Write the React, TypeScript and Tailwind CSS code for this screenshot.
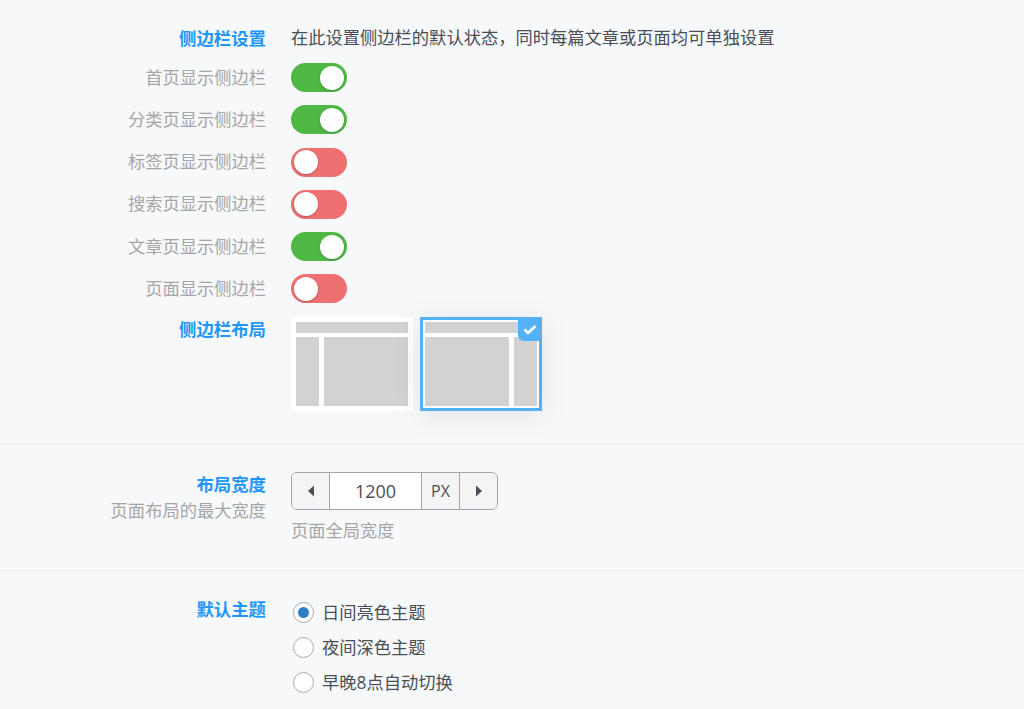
import React from 'react';

const labelFont = "font-['Open_Sans','Noto_Sans_CJK_SC',sans-serif]";

const sidebarRows = [
    { label: '首页显示侧边栏', on: true },
    { label: '分类页显示侧边栏', on: true },
    { label: '标签页显示侧边栏', on: false },
    { label: '搜索页显示侧边栏', on: false },
    { label: '文章页显示侧边栏', on: true },
    { label: '页面显示侧边栏', on: false },
];

const Toggle = ({ on }: { on: boolean }) => (
    <div
        className={`flex h-[29px] w-14 items-center rounded-full border-2 px-[1px] ${
            on ? 'justify-end border-[#4fb845] bg-[#4fb845]' : 'justify-start border-[#ee7071] bg-[#ee7071]'
        }`}
    >
        <div className="h-6 w-6 rounded-full bg-white shadow-[0_1px_2px_rgba(0,0,0,0.25)]" />
    </div>
);

const Title = ({ children }: { children: React.ReactNode }) => (
    <div className="text-right text-[17.4px] leading-6 font-bold text-[#1e96fb]">{children}</div>
);

const LayoutPick = ({ side, active }: { side: 'left' | 'right'; active?: boolean }) => (
    <div
        className={`relative flex h-[94px] w-[122px] flex-col gap-1 bg-white ${
            active ? 'border-[3px] border-[#55b1f5] p-[2px] shadow-[0_4px_28px_rgba(0,0,0,0.09)]' : 'p-[5px]'
        }`}
    >
        <div className="h-[11px] shrink-0 bg-[#d2d2d2]" />
        <div className={`flex flex-1 gap-[5px] ${side === 'right' ? 'flex-row-reverse' : ''}`}>
            <div className="w-[23px] bg-[#d2d2d2]" />
            <div className="flex-1 bg-[#d2d2d2]" />
        </div>
        {active && (
            <div className="absolute -right-[3px] -top-[3px] flex h-6 w-6 items-center justify-center rounded-bl-md bg-[#55b1f5]">
                <svg width="14" height="11" viewBox="0 0 14 11">
                    <path d="M1.5 5.5 L5 9 L12.5 2" fill="none" stroke="white" strokeWidth="2.6" />
                </svg>
            </div>
        )}
    </div>
);

const Radio = ({ label, checked }: { label: string; checked?: boolean }) => (
    <div className="flex h-[35px] items-center gap-2 text-[17.28px] text-[#4a4f57]">
        <div className="ml-[2px] flex h-[21px] w-[21px] items-center justify-center rounded-full border border-[#a9a9a9] bg-white">
            {checked && <div className="h-[11px] w-[11px] rounded-full bg-[#2f7fc6]" />}
        </div>
        <span>{label}</span>
    </div>
);

export default function App() {
    return (
        <div className={`h-[709px] overflow-hidden bg-[#f6f8fa] ${labelFont}`}>
            {/* 侧边栏设置 */}
            <section className="flex h-[445px] items-start gap-[25px] border-b border-[#eceef0] pt-[26px]">
                <div className="w-[266px] shrink-0">
                    <div className="flex h-6 items-center justify-end">
                        <Title>侧边栏设置</Title>
                    </div>
                    <div className="mt-[13px] flex flex-col gap-[13.3px]">
                        {sidebarRows.map(row => (
                            <div key={row.label} className="flex h-[29px] items-center justify-end text-[17.28px] text-[#a6a6a6]">
                                {row.label}
                            </div>
                        ))}
                    </div>
                    <div className="mt-[14px]">
                        <Title>侧边栏布局</Title>
                    </div>
                </div>
                <div>
                    <div className="flex h-6 items-center text-[17.28px] text-[#4a4f57]">
                        在此设置侧边栏的默认状态，同时每篇文章或页面均可单独设置
                    </div>
                    <div className="mt-[13px] flex flex-col gap-[13.3px]">
                        {sidebarRows.map(row => (
                            <Toggle key={row.label} on={row.on} />
                        ))}
                    </div>
                    <div className="mt-[14px] flex gap-[7px]">
                        <LayoutPick side="left" />
                        <LayoutPick side="right" active />
                    </div>
                </div>
            </section>

            {/* 布局宽度 */}
            <section className="flex h-[126px] items-start gap-[25px] border-b border-[#eceef0] pt-[27px]">
                <div className="w-[266px] shrink-0 text-right">
                    <Title>布局宽度</Title>
                    <div className="mt-[3px] text-[17.28px] leading-6 text-[#a6a6a6]">页面布局的最大宽度</div>
                </div>
                <div>
                    <div className="flex h-[38px] w-[207px] overflow-hidden rounded-md border border-[#a3a6aa] text-[#4a4f57]">
                        <div className="flex w-[38px] items-center justify-center border-r border-[#a3a6aa] bg-[#f4f4f5]">
                            <svg width="8" height="12" viewBox="0 0 8 12">
                                <path d="M7 0.5 V11.5 L1 6 Z" fill="#4a4f57" />
                            </svg>
                        </div>
                        <div className="flex flex-1 items-center justify-center bg-white text-lg">1200</div>
                        <div className="flex w-[39px] items-center justify-center border-x border-[#a3a6aa] bg-[#f4f4f5] text-base">PX</div>
                        <div className="flex w-[37px] items-center justify-center bg-[#f4f4f5]">
                            <svg width="8" height="12" viewBox="0 0 8 12">
                                <path d="M1 0.5 V11.5 L7 6 Z" fill="#4a4f57" />
                            </svg>
                        </div>
                    </div>
                    <div className="mt-[9px] text-[17.28px] leading-6 text-[#a6a6a6]">页面全局宽度</div>
                </div>
            </section>

            {/* 默认主题 */}
            <section className="flex items-start gap-[25px] pt-[26px]">
                <div className="w-[266px] shrink-0">
                    <Title>默认主题</Title>
                </div>
                <div className="-mt-[2px]">
                    <Radio label="日间亮色主题" checked />
                    <Radio label="夜间深色主题" />
                    <Radio label="早晚8点自动切换" />
                </div>
            </section>
        </div>
    );
}
